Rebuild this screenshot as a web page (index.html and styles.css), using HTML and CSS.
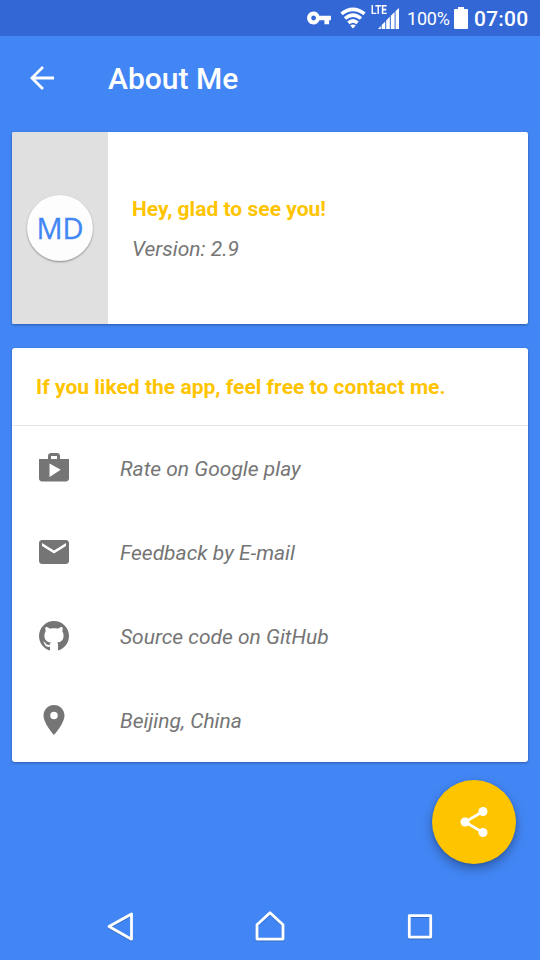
FILE: index.html
```html
<!DOCTYPE html>
<html lang="en">
<head>
<meta charset="utf-8">
<title>About Me</title>
<link rel="stylesheet" href="styles.css">
</head>
<body>
<div class="screen">
  <div class="status">
    <svg class="key" width="26" height="26" viewBox="0 0 24 24"><path d="M12.3 10C11.6 7.67 9.61 6 7 6c-3.31 0-6 2.69-6 6s2.69 6 6 6c2.61 0 4.6-1.67 5.3-4H17v3.7h4.3V14H23v-4H12.3zM7 14.2c-1.200 0-2.200-1-2.200-2.200s1-2.200 2.200-2.200 2.200 1 2.200 2.200-1 2.200-2.200 2.200z"/></svg>
    <svg class="wifi" width="26" height="22" viewBox="0 0 26 22"><g fill="none" stroke="#fff" stroke-width="3.5"><path d="M1.500 6.800Q13-2.100 24.500 6.800"/><path d="M5 11.500Q13 4.700 21 11.500"/><path d="M8.400 15.900Q13 11.900 17.600 15.900"/></g><path d="M10.2 18.500Q13 16.300 15.8 18.500L13 21.4z"/></svg>
    <div class="signal"><span class="lte">LTE</span><svg width="22" height="22" viewBox="0 0 22 22"><path d="M0 21l2.8-3v3zM3.7 21v-4l3.5-3.6V21zM8.2 21v-8.6l3.6-3.6V21zM12.8 21V7.7L16.600 4v17zM17.600 21V3L21 0v21z"/></svg></div>
    <span class="percent">100%</span>
    <svg class="battery" width="14" height="22" viewBox="0 0 14 22"><path d="M4 0h6v2h3q1 0 1 1v18q0 1-1 1H1q-1 0-1-1V3q0-1 1-1h3z"/></svg>
    <span class="clock">07:00</span>
  </div>
  <header class="toolbar">
    <svg width="36" height="36" viewBox="0 0 24 24"><path d="M20 11H7.600l5.700-5.600L12 4l-8 8 8 8 1.300-1.400L7.600 13H20v-2z"/></svg>
    <h1 class="title">About Me</h1>
  </header>
  <section class="card intro">
    <div class="side"><div class="avatar">MD</div></div>
    <div class="greeting">
      <p class="accent">Hey, glad to see you!</p>
      <p class="detail">Version: 2.9</p>
    </div>
  </section>
  <section class="card contact">
    <h2 class="accent heading">If you liked the app, feel free to contact me.</h2>
    <div class="row"><svg width="36" height="36" viewBox="0 0 24 24"><path d="M16 6V4c0-1.11-.89-2-2-2h-4c-1.11 0-2 .89-2 2v2H2v13c0 1.11.89 2 2 2h16c1.11 0 2-.89 2-2V6h-6zm-6-2h4v2h-4V4zM9 18V9l7.5 4.2z"/></svg><span class="detail">Rate on Google play</span></div>
    <div class="row"><svg width="36" height="36" viewBox="0 0 24 24"><path d="M20 4H4c-1.1 0-2 .9-2 2v12c0 1.1.9 2 2 2h16c1.1 0 2-.9 2-2V6c0-1.1-.9-2-2-2zm0 4l-8 5-8-5V6l8 5 8-5v2z"/></svg><span class="detail">Feedback by E-mail</span></div>
    <div class="row"><svg width="36" height="36" viewBox="0 0 36 36"><path d="M14 32.5C7.8 30.8 3 25 3 18a15 15 0 0 1 30 0c0 7-4.8 12.8-11 14.5V27c0-1-.3-1.8-.8-2.4 4-.4 6.4-2.4 6.4-7 0-1.9-.5-3.3-1.3-4.4.5-1.4.4-2.9 0-4.2-1.5 0-3 .7-4.3 1.7-2.6-.5-5.4-.5-8 0C12.7 9.7 11.2 9 9.7 9c-.4 1.3-.5 2.8 0 4.200-.8 1.100-1.300 2.500-1.300 4.400 0 4.600 2.500 6.600 6.400 7-.5.500-.8 1.200-.8 2-2 .700-3.300.200-4.200-1.100-.7-1.100-1.600-1.900-3.200-1.900 1.200.800 1.600 1.700 2.100 2.900.9 2 2.800 2.700 5.300 2.300z"/></svg><span class="detail">Source code on GitHub</span></div>
    <div class="row"><svg width="36" height="36" viewBox="0 0 24 24"><path d="M12 2C8.13 2 5 5.13 5 9c0 5.25 7 13 7 13s7-7.75 7-13c0-3.87-3.13-7-7-7zm0 9.5a2.5 2.5 0 1 1 0-5 2.5 2.5 0 0 1 0 5z"/></svg><span class="detail">Beijing, China</span></div>
  </section>
  <div class="fab"><svg width="36" height="36" viewBox="0 0 24 24"><path d="M18 5L6 12l12 7" fill="none" stroke="#fff" stroke-width="1.8"/><circle cx="18" cy="5" r="3"/><circle cx="6" cy="12" r="3"/><circle cx="18" cy="19" r="3"/></svg></div>
  <nav class="navbar">
    <svg width="36" height="36" viewBox="0 0 36 36"><path d="M29.500 6v25.200L7 18.500z"/></svg>
    <svg width="36" height="36" viewBox="0 0 36 36"><path d="M18 4.700l13 12v14.400H5V16.700z"/></svg>
    <svg width="36" height="36" viewBox="0 0 36 36"><path d="M7.300 7.700h21.400v21.400H7.300z"/></svg>
  </nav>
</div>
</body>
</html>
```
FILE: styles.css
```css
* { box-sizing: border-box; margin: 0; padding: 0; }
body { font-family: Roboto, "Liberation Sans", sans-serif; }
svg { display: block; fill: currentColor; flex: none; }
.screen { width: 540px; height: 960px; display: flex; flex-direction: column; background: #4286f5; color: #fff; overflow: hidden; }
.status { height: 36px; flex: none; display: flex; align-items: center; background: #3367d6; padding-left: 306px; white-space: nowrap; }
.wifi { margin-left: 8px; }
.signal { width: 29px; height: 36px; margin-left: 5px; position: relative; display: flex; padding: 8px 0 0 7px; }
.lte { position: absolute; left: 0; top: 3px; font-size: 13px; line-height: 14px; font-weight: 500; transform: scaleX(.76); transform-origin: left; -webkit-text-stroke: .2px #fff; }
.percent { width: 42px; margin-left: 7px; font-size: 18px; line-height: 36px; padding-top: 1px; letter-spacing: -.2px; }
.battery { margin-left: 5px; }
.clock { margin-left: 6px; font-size: 21px; line-height: 36px; font-weight: 500; padding-top: 1px; letter-spacing: .2px; }
.toolbar { height: 84px; flex: none; display: flex; align-items: center; padding-left: 24px; gap: 48px; }
.title { font-size: 30px; font-weight: 500; line-height: 36px; padding-top: 2px; }
.card { margin: 12px 12px 0; background: #fff; border-radius: 3px; box-shadow: 0 1px 3px rgba(0,0,0,.32); flex: none; overflow: hidden; }
.intro { height: 192px; display: flex; border-radius: 2px; }
.side { width: 96px; background: #e0e0e0; display: flex; align-items: center; justify-content: center; }
.avatar { width: 66px; height: 66px; border-radius: 50%; background: #fdfdfd; box-shadow: 0 1px 2px rgba(0,0,0,.4); color: #4286f5; font: 29px/65px "Open Sans", sans-serif; text-align: center; -webkit-text-stroke: .3px #4286f5; }
.greeting { display: flex; flex-direction: column; justify-content: center; gap: 15px; padding: 2px 0 0 24px; }
.accent { color: #ffc400; font-size: 21px; line-height: 25px; font-weight: 700; letter-spacing: .02px; }
.detail { color: #757575; font-size: 21px; line-height: 25px; font-style: italic; }
.contact { margin-top: 24px; height: 414px; }
.heading { height: 78px; padding: 27px 24px 0; border-bottom: 1px solid #e6e6e6; white-space: nowrap; }
.row { height: 84px; display: flex; align-items: center; gap: 48px; padding-left: 24px; color: #757575; }
.row .detail { padding-top: 2px; }
.fab { width: 84px; height: 84px; flex: none; margin: 18px 24px 0 auto; border-radius: 50%; background: #ffc400; display: flex; align-items: center; justify-content: center; box-shadow: 0 5px 12px rgba(0,0,0,.3), 0 1px 3px rgba(0,0,0,.15); }
.navbar { height: 72px; margin-top: auto; padding: 4px 102px 0 102px; display: flex; align-items: center; justify-content: space-between; }
.navbar path { fill: none; stroke: #fff; stroke-width: 2.8; stroke-linejoin: round; }
.navbar svg { filter: drop-shadow(0 1px 0 rgba(0,0,0,.2)); }
```
